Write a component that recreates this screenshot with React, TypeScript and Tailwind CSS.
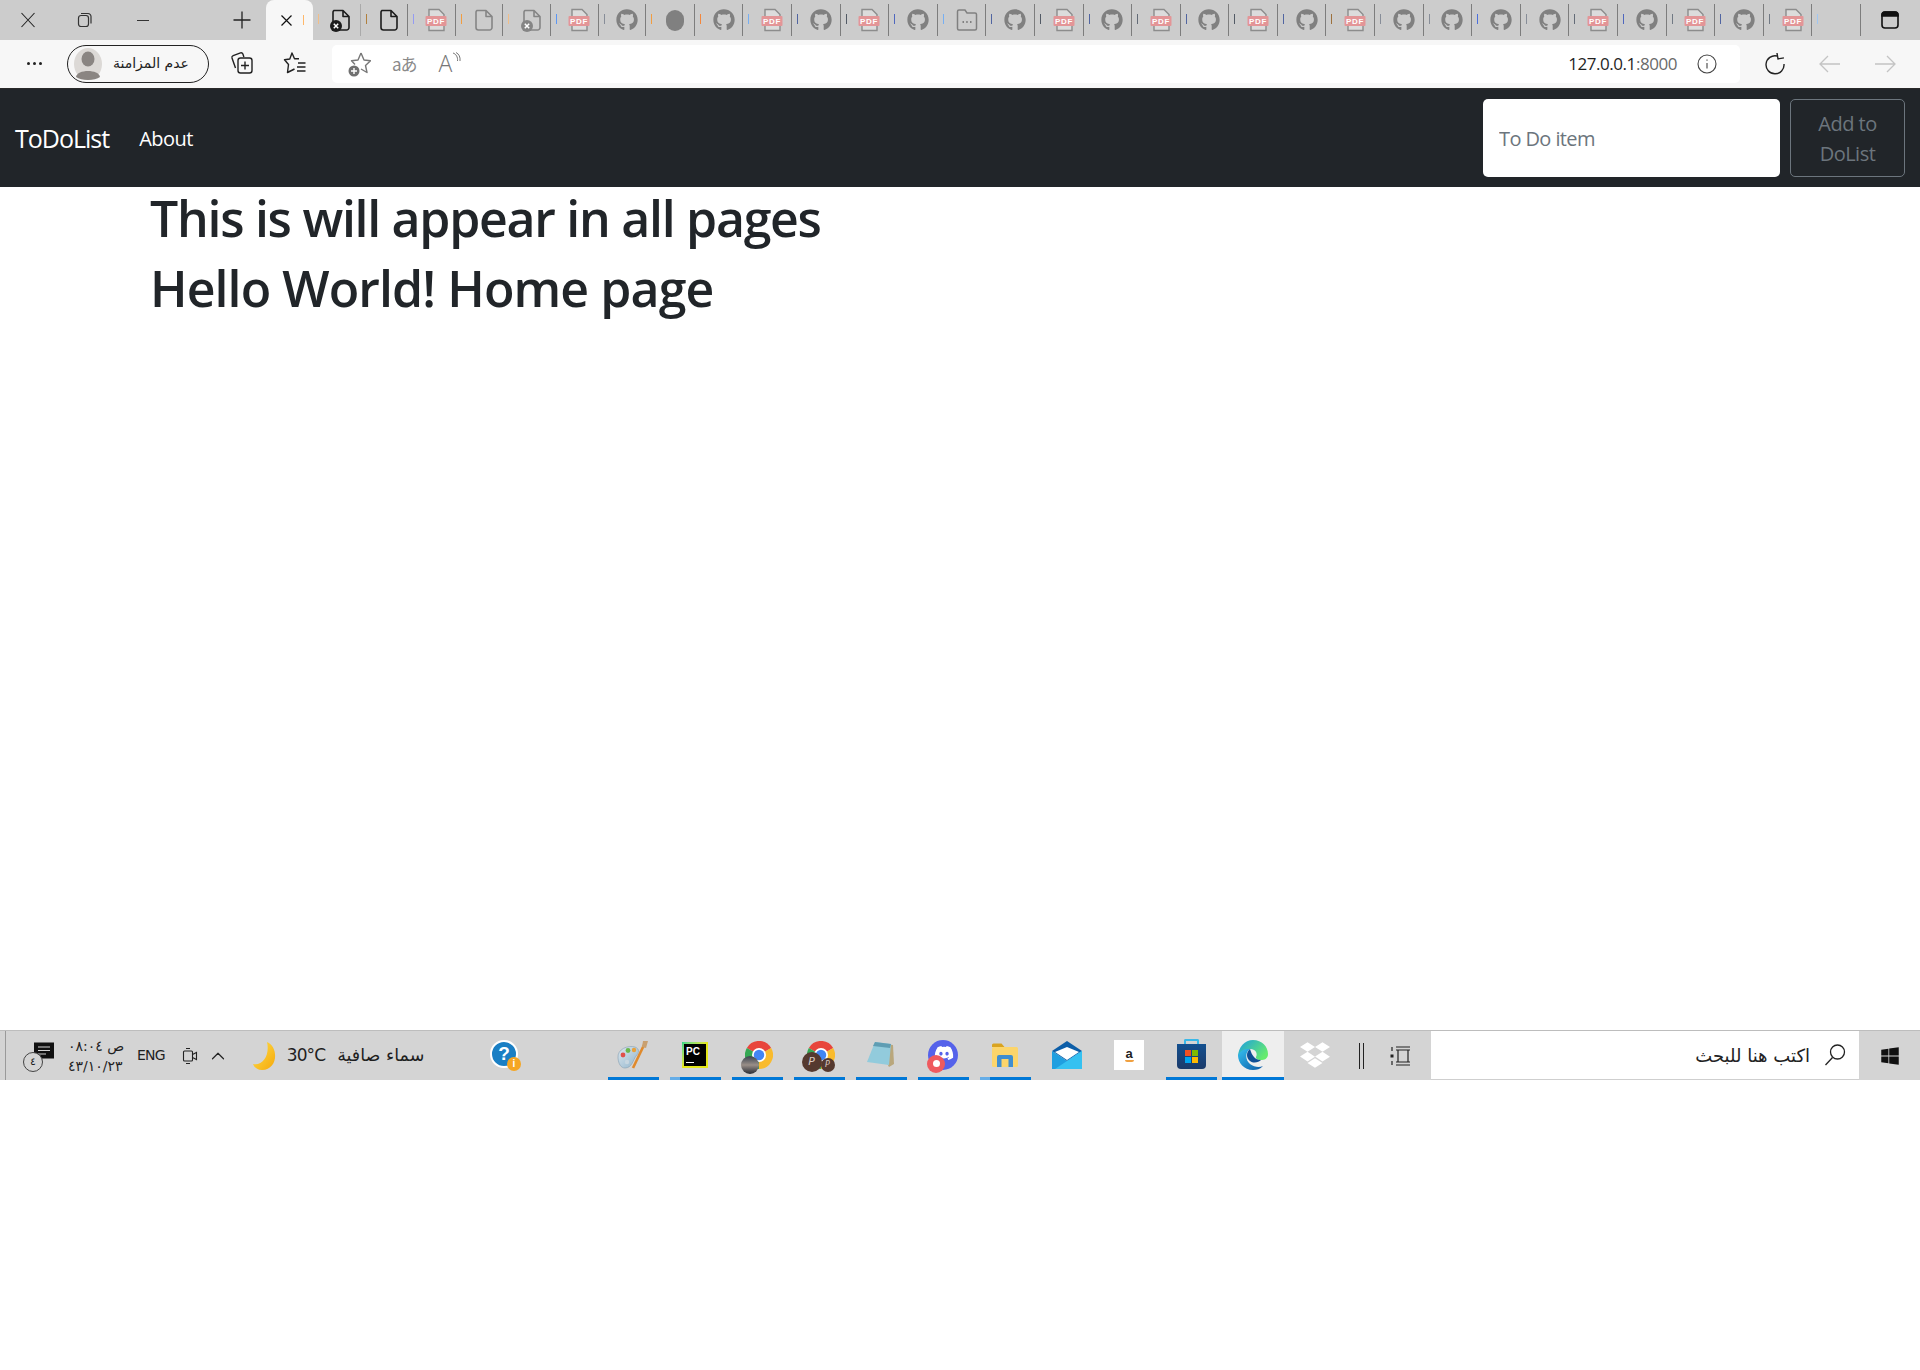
import { ChevronUp } from "lucide-react";
import { FaGithub, FaWindows, FaDropbox, FaDiscord } from "react-icons/fa";

// شريط التبويبات: ترتيب الأيقونات من اليسار إلى اليمين
const tabs = [
  { icon: "filex-dark", sliver: "bg-orange-300", faint: true },
  { icon: "file-dark", sliver: "bg-yellow-700" },
  { icon: "pdf", sliver: "bg-indigo-400" },
  { icon: "file", sliver: "bg-orange-400" },
  { icon: "filex", sliver: "bg-orange-300" },
  { icon: "pdf", sliver: "bg-blue-500" },
  { icon: "github", sliver: "bg-gray-500" },
  { icon: "dot", sliver: "bg-orange-400" },
  { icon: "github", sliver: "bg-orange-500" },
  { icon: "pdf", sliver: "bg-blue-400" },
  { icon: "github", sliver: "bg-blue-900" },
  { icon: "pdf", sliver: "bg-gray-800" },
  { icon: "github", sliver: "bg-blue-800" },
  { icon: "box", sliver: "bg-blue-400" },
  { icon: "github", sliver: "bg-blue-900" },
  { icon: "pdf", sliver: "bg-gray-800" },
  { icon: "github", sliver: "bg-blue-900" },
  { icon: "pdf", sliver: "bg-gray-700" },
  { icon: "github", sliver: "bg-blue-900" },
  { icon: "pdf", sliver: "bg-gray-800" },
  { icon: "github", sliver: "bg-blue-900" },
  { icon: "pdf", sliver: "bg-yellow-800" },
  { icon: "github", sliver: "bg-gray-500" },
  { icon: "github", sliver: "bg-gray-500" },
  { icon: "github", sliver: "bg-blue-700" },
  { icon: "github", sliver: "bg-gray-500" },
  { icon: "pdf", sliver: "bg-gray-700" },
  { icon: "github", sliver: "bg-blue-800" },
  { icon: "pdf", sliver: "bg-gray-600" },
  { icon: "github", sliver: "bg-blue-900" },
  { icon: "pdf", sliver: "bg-gray-600" },
  { icon: "none", sliver: "bg-blue-300" },
];

function FileShape({ color, badge }: { color: string; badge?: boolean }) {
  return (
    <svg width="26" height="26" viewBox="0 0 26 26" fill="none" stroke={color} strokeWidth="1.6">
      <path d="M6 3.5 h9 l6 6 v11 a2.5 2.5 0 0 1 -2.5 2.5 h-11 a2.5 2.5 0 0 1 -2.5 -2.5 v-15 a2 2 0 0 1 1 -2 z M15 3.5 v6 h6" strokeLinejoin="round" />
      {badge && <circle cx="8" cy="19" r="6" fill={color} stroke="none" />}
      {badge && <path d="M5.8 16.8 l4.4 4.4 M10.2 16.8 l-4.4 4.4" stroke="#fff" strokeWidth="1.5" />}
    </svg>
  );
}

function PdfIcon() {
  return (
    <svg width="26" height="26" viewBox="0 0 26 26" fill="none">
      <path d="M6 2.5 h10 l5 5 v16 h-15 z" stroke="#8c8c8c" strokeWidth="1.4" fill="#dcdcdc" />
      <rect x="2.5" y="9" width="21" height="10" rx="1" fill="#e39597" />
      <text x="13" y="17" textAnchor="middle" fontSize="8" fontWeight="700" fill="#fff" fontFamily="Liberation Sans, sans-serif" letterSpacing="0.6">PDF</text>
    </svg>
  );
}

function TabIcon({ name }: { name: string }) {
  if (name === "github") return <FaGithub className="text-[#808080] w-[22px] h-[22px]" />;
  if (name === "pdf") return <PdfIcon />;
  if (name === "file") return <FileShape color="#858585" />;
  if (name === "file-dark") return <FileShape color="#1c1c1c" />;
  if (name === "filex") return <FileShape color="#858585" badge />;
  if (name === "filex-dark") return <FileShape color="#1c1c1c" badge />;
  if (name === "dot") return <div className="w-[18px] h-[21px] rounded-full bg-[#808080]" />;
  if (name === "box")
    return (
      <svg width="22" height="24" viewBox="0 0 22 24" fill="none" stroke="#808080" strokeWidth="1.5">
        <path d="M3 2 h6 l2 3 h8 a1.5 1.5 0 0 1 1.5 1.5 v14 a1.5 1.5 0 0 1 -1.5 1.5 h-16 a1.5 1.5 0 0 1 -1.5 -1.5 v-17 a1.5 1.5 0 0 1 1.5 -1.5 z" />
        <path d="M6.5 14 h1.5 M10.2 14 h1.5 M14 14 h1.5" strokeWidth="2" />
      </svg>
    );
  return null;
}

function TabBar() {
  return (
    <div className="flex h-10 bg-[#cccccc] overflow-hidden">
      <div className="w-[266px] shrink-0 flex items-center text-[#1c1c1c]">
        <svg className="ml-[20px]" width="16" height="16" viewBox="0 0 16 16" stroke="#222" strokeWidth="1.1"><path d="M1.5 1 L14.5 15 M14.5 1 L1.5 15" /></svg>
        <svg className="ml-[41px]" width="16" height="16" viewBox="0 0 16 16" fill="none" stroke="#333" strokeWidth="1.2"><rect x="1.5" y="3.5" width="10" height="11" rx="2.5" /><path d="M4 1.5 h7 a3 3 0 0 1 3 3 v7" /></svg>
        <div className="ml-[44px] w-[12px] h-px bg-[#333]" />
        <svg className="ml-[84px]" width="18" height="18" viewBox="0 0 18 18" stroke="#222" strokeWidth="1.3"><path d="M9 0.5 V17.5 M0.5 9 H17.5" /></svg>
      </div>
      <div className="w-[47px] shrink-0 h-full bg-[#f7f7f7] rounded-t-lg flex items-center relative">
        <svg className="ml-[15px]" width="11" height="11" viewBox="0 0 11 11" stroke="#111" strokeWidth="1.2"><path d="M0.5 0.5 L10.5 10.5 M10.5 0.5 L0.5 10.5" /></svg>
        <div className="ml-[11px] w-px h-[10px] bg-orange-300" />
      </div>
      {tabs.map((t, i) => (
        <div
          key={i}
          className={`relative h-[32px] mt-[4px] shrink-0 flex items-center justify-center border-r pl-[10px] ${i < 7 ? "w-[47.6px]" : "w-[48.6px]"} ${t.faint ? "border-[#aaaaaa]" : "border-[#7d7d7d]"}`}
        >
          <div className={`absolute left-[5px] top-[10px] w-px h-[10px] opacity-70 ${t.sliver}`} />
          <TabIcon name={t.icon} />
        </div>
      ))}
      <div className="flex-1 flex items-center justify-end pr-[20px]">
        <svg width="20" height="20" viewBox="0 0 20 20" fill="none" stroke="#111" strokeWidth="1.6">
          <rect x="2" y="2" width="16" height="16" rx="3" />
          <path d="M2 6 h16 V5 a3 3 0 0 0 -3 -3 H5 a3 3 0 0 0 -3 3 z" fill="#111" />
        </svg>
      </div>
    </div>
  );
}

function ToolBar() {
  return (
    <div className="flex items-center h-[49px] bg-[#f7f7f7] border-b border-[#2a2a2a] pb-[1px]">
      <div className="w-[67px] shrink-0 flex justify-center gap-[3px] pl-[2px]">
        <span className="w-[3px] h-[3px] rounded-full bg-[#222]" />
        <span className="w-[3px] h-[3px] rounded-full bg-[#222]" />
        <span className="w-[3px] h-[3px] rounded-full bg-[#222]" />
      </div>
      <div className="w-[142px] h-[38px] shrink-0 rounded-full border-[1.5px] border-[#222] flex items-center pl-[5px] gap-[10px]">
        <svg width="30" height="32" viewBox="0 0 30 32" className="shrink-0">
          <ellipse cx="15" cy="16" rx="14" ry="16" fill="#dcd9d6" />
          <ellipse cx="15" cy="11" rx="6.5" ry="7.5" fill="#8a8582" />
          <path d="M3 29 C4 21 26 21 27 29 C22 33 8 33 3 29 z" fill="#8a8582" />
        </svg>
        <span dir="rtl" className="text-[14px] text-[#222] [font-family:'DejaVu_Sans',sans-serif] whitespace-nowrap tracking-[-0.5px]">عدم المزامنة</span>
      </div>
      <svg className="ml-[21px] shrink-0 -mt-[1px]" width="24" height="24" viewBox="0 0 24 24" fill="none" stroke="#222" strokeWidth="1.4">
        <path d="M5.5 17 L2 7 a2 2 0 0 1 1.2 -2.4 L10.5 1.8 a2 2 0 0 1 2.4 1.2 l1 3" />
        <rect x="8" y="7" width="14" height="15" rx="2.5" />
        <path d="M15 10.5 v8 M11 14.5 h8" />
      </svg>
      <svg className="ml-[29px] shrink-0 -mt-[1px]" width="24" height="24" viewBox="0 0 24 24" fill="none" stroke="#222" strokeWidth="1.4">
        <path d="M16 7.8 L11.5 7.8 L9 2 L6.8 8 L1.5 8.8 L5.5 13.5 L4.5 21.5 L11.5 18 M15 12 h7.5 M14 16 h8.5 M14 20 h8.5" strokeLinejoin="round" />
      </svg>
      <div className="ml-[25px] flex-1 h-[38px] bg-white rounded-[5px] flex items-center mr-[180px] relative">
        <svg className="ml-[15px] shrink-0" width="24" height="26" viewBox="0 0 24 26" fill="none" stroke="#777" strokeWidth="1.4">
          <path d="M14 2 L17 9 L23.5 9.8 L18.5 14.5 L20 21.5 L14 18" strokeLinejoin="round" />
          <path d="M14 2 L11 9 L4.5 9.8 L8 13.5" strokeLinejoin="round" />
          <circle cx="7" cy="20" r="5.5" fill="#707070" stroke="none" />
          <path d="M7 17 v6 M4 20 h6" stroke="#fff" strokeWidth="1.4" />
        </svg>
        <span className="ml-[21px] text-[17px] text-[#8a8a8a] [font-family:'Noto_Sans_CJK_JP',sans-serif] tracking-[-1px] leading-none">aあ</span>
        <span className="ml-[22px] text-[23px] text-[#777] [font-family:'Open_Sans',sans-serif] font-light leading-none relative">
          A
          <svg className="absolute -right-[9px] top-0" width="9" height="10" viewBox="0 0 9 10" fill="none" stroke="#777" strokeWidth="1"><path d="M1 1 C4 2 6 5 5.5 9 M4 0.5 C7 2 8.5 5 8 9" /></svg>
        </span>
        <span className="ml-auto text-[17px] tracking-[-0.45px] text-[#1f1f1f] [font-family:'Open_Sans',sans-serif]">127.0.0.1<span className="text-[#6a6a6a]">:8000</span></span>
        <svg className="ml-[20px] mr-[23px] shrink-0" width="20" height="20" viewBox="0 0 20 20" fill="none" stroke="#444" strokeWidth="1.1">
          <circle cx="10" cy="10" r="9" />
          <path d="M10 9 v5.5 M10 5.5 v1.3" />
        </svg>
      </div>
      <div className="absolute left-[1764px] flex items-center">
        <svg width="22" height="22" viewBox="0 0 22 22" fill="none" stroke="#222" strokeWidth="1.4">
          <path d="M13 3 A9 9 0 1 0 20 11" />
          <path d="M13.5 0 V6 H19.5" strokeWidth="1.4" transform="rotate(-10 13 3)" />
        </svg>
        <svg className="ml-[33px]" width="22" height="18" viewBox="0 0 22 18" fill="none" stroke="#c4c4c4" strokeWidth="1.3"><path d="M21 9 H1 M9 1 L1 9 L9 17" /></svg>
        <svg className="ml-[33px]" width="22" height="18" viewBox="0 0 22 18" fill="none" stroke="#c4c4c4" strokeWidth="1.3"><path d="M1 9 H21 M13 1 L21 9 L13 17" /></svg>
      </div>
    </div>
  );
}

function NavBar() {
  return (
    <nav className="flex items-center justify-between h-[98px] bg-[#212529] px-[15px] [font-family:'Open_Sans',sans-serif]">
      <div className="flex items-center pt-[2px]">
        <span className="text-[25px] text-white tracking-[-1px]">ToDoList</span>
        <a className="ml-[30px] text-[20px] text-white tracking-[-0.55px]">About</a>
      </div>
      <form className="flex items-center gap-[10px]">
        <input
          placeholder="To Do item"
          className="w-[297px] h-[78px] bg-white rounded-[5px] px-[16px] text-[20px] tracking-[-0.6px] placeholder:text-[#6c757d] outline-none"
        />
        <button type="button" className="w-[115px] h-[78px] pt-[2px] rounded-[5px] border border-[#6c757d] text-[#6c757d] text-[20px] leading-[30px] tracking-[-0.5px]">
          Add to DoList
        </button>
      </form>
    </nav>
  );
}

function Palette() {
  return (
    <svg width="32" height="32" viewBox="0 0 32 32">
      <defs>
        <linearGradient id="pal" x1="0" y1="0" x2="1" y2="1"><stop offset="0" stopColor="#dfe8ee" /><stop offset="1" stopColor="#8fb4cc" /></linearGradient>
      </defs>
      <path d="M1 19 C0 10 11 6 18 8 C23 10 22 14 19 17 C16 21 15 29 8 29 C4 29 1.5 25 1 19 z" fill="url(#pal)" stroke="#8ea6b8" strokeWidth="0.7" />
      <circle cx="6" cy="16" r="2.4" fill="#e0504a" />
      <circle cx="11" cy="11.5" r="2.4" fill="#6bb84c" />
      <circle cx="17" cy="11" r="2.2" fill="#e9a13a" />
      <circle cx="10" cy="23" r="2.2" fill="#c7d6e0" />
      <path d="M27 6 L16 29" stroke="#e08a2c" strokeWidth="2.6" />
      <path d="M25 8 L26 2 L31 2 L29 9 z" fill="#c9a070" />
    </svg>
  );
}

function Chrome({ children }: { children: React.ReactNode }) {
  return (
    <div className="relative w-[28px] h-[28px] ml-[3px]">
      <svg width="28" height="28" viewBox="0 0 32 32">
        <path d="M16 16 L2.1 8 A16 16 0 0 1 29.9 8 z" fill="#e8453c" />
        <path d="M16 16 L29.9 8 A16 16 0 0 1 16 32 z" fill="#f9bb2d" />
        <path d="M16 16 L16 32 A16 16 0 0 1 2.1 8 z" fill="#34a853" />
        <circle cx="16" cy="16" r="8" fill="#fff" />
        <circle cx="16" cy="16" r="6" fill="#4285f4" />
      </svg>
      {children}
    </div>
  );
}

const taskIcons = [
  { running: true, node: <Palette /> },
  {
    running: true,
    multi: true,
    node: (
      <div className="w-[26px] h-[26px] bg-gradient-to-br from-[#21d789] via-[#e4e71a] to-[#e4e71a] p-[2px]">
        <div className="w-full h-full bg-black text-white text-[10px] font-bold leading-[12px] px-[2px] pt-[2px] [font-family:'Liberation_Sans',sans-serif]">
          PC
          <div className="w-[8px] h-px bg-white mt-[4px]" />
        </div>
      </div>
    ),
  },
  {
    running: true,
    node: (
      <Chrome>
        <div className="absolute -left-[4px] bottom-[-5px] w-[18px] h-[18px] rounded-full bg-gradient-to-b from-[#3b4450] via-[#9a8f88] to-[#2a2d35]" />
      </Chrome>
    ),
  },
  {
    running: true,
    node: (
      <Chrome>
        <div className="absolute -left-[5px] bottom-[-3px] w-[20px] h-[20px] rounded-full bg-[#55392f] text-[#d8c8c0] text-[11px] italic text-center leading-[20px]">P</div>
        <div className="absolute left-[14px] bottom-[-3px] w-[14px] h-[14px] rounded-full bg-[#55392f] text-[#d8c8c0] text-[8px] italic text-center leading-[14px]">P</div>
      </Chrome>
    ),
  },
  {
    running: true,
    node: (
      <svg width="30" height="30" viewBox="0 0 30 30">
        <path d="M10 3 L27 5 L28 24 L23 27 z" fill="#b9a77c" />
        <path d="M9 2 L25 4 L23 25 L1 22 z" fill="#92cbdc" />
        <path d="M9 2 L25 4 L24 8 L7 6 z" fill="#5f9db3" />
      </svg>
    ),
  },
  {
    running: true,
    node: (
      <div className="relative w-[30px] h-[30px] rounded-full bg-[#5562ea] flex items-center justify-center">
        <FaDiscord className="text-white w-[20px] h-[20px] -mt-[4px] ml-[2px]" />
        <div className="absolute -left-[1px] bottom-[-3px] w-[18px] h-[18px] rounded-full bg-[#ef5a5f] flex items-center justify-center">
          <div className="w-[7px] h-[7px] rounded-full bg-white" />
        </div>
      </div>
    ),
  },
  {
    running: true,
    multi: true,
    node: (
      <svg width="28" height="24" viewBox="0 0 28 24">
        <path d="M1 2 a1.5 1.5 0 0 1 1.5 -1.5 h8 l3 3.5 h-12.5 z" fill="#d9a320" />
        <rect x="1" y="4" width="26" height="20" rx="1.5" fill="#fcd56b" />
        <path d="M6 24 V14 a2 2 0 0 1 2 -2 H20 a2 2 0 0 1 2 2 V24 H17.5 V16 H10.5 V24 z" fill="#3f8ed0" />
      </svg>
    ),
  },
  {
    running: false,
    node: (
      <svg width="30" height="28" viewBox="0 0 30 28">
        <path d="M0 10 L15 0 L30 10 L15 20 z" fill="#0d5ea8" />
        <path d="M3 11 L15 6 L27 11 L15 19 z" fill="#fff" />
        <path d="M0 10 L15 20 L30 10 V28 H0 z" fill="#1f9fe0" />
        <path d="M30 10 V28 H3 z" fill="#35c1f1" />
      </svg>
    ),
  },
  {
    running: false,
    node: (
      <div className="w-[30px] h-[30px] bg-white flex flex-col items-center justify-center text-[#222] text-[13px] font-bold leading-none [font-family:'Liberation_Sans',sans-serif]">
        a
        <div className="w-[9px] h-[2px] rounded-b-full bg-[#f0a040]" />
      </div>
    ),
  },
  {
    running: true,
    node: (
      <div className="relative w-[29px] h-[30px] mt-[-2px]">
        <div className="absolute left-[7px] top-0 w-[15px] h-[8px] border-2 border-b-0 border-[#3ab8e8] rounded-t-[2px]" />
        <div className="absolute left-0 top-[5px] w-[29px] h-[25px] rounded-b-[4px] bg-gradient-to-b from-[#12508f] to-[#1a3a6a] grid grid-cols-2 gap-px px-[8px] py-[6px]">
          <div className="bg-[#f25022]" />
          <div className="bg-[#7fba00]" />
          <div className="bg-[#00a4ef]" />
          <div className="bg-[#ffb900]" />
        </div>
      </div>
    ),
  },
  {
    running: true,
    active: true,
    node: (
      <svg width="30" height="30" viewBox="0 0 30 30">
        <defs>
          <linearGradient id="edgeA" x1="0" y1="0" x2="1" y2="1"><stop offset="0" stopColor="#35c1f1" /><stop offset="1" stopColor="#0c59a4" /></linearGradient>
          <linearGradient id="edgeB" x1="0" y1="0" x2="1" y2="0.6"><stop offset="0" stopColor="#1b9de2" /><stop offset="1" stopColor="#66eb6e" /></linearGradient>
        </defs>
        <path d="M15 0 C24 0 30 6.5 30 14 C30 19 26 20 23 20 C19 20 17.5 18.5 18 17 C19.5 15 19 9.5 13 9 C8 9 3 13 0 17 C0 7 7 0 15 0 z" fill="url(#edgeB)" />
        <path d="M0 15 C3 10 8 8 12 9 C7 12 7 20 12 24 C16 27 21 28 25 26 C22 29 19 30 15 30 C6 30 0 23 0 15 z" fill="url(#edgeA)" />
        <path d="M12 9 C8 12 8 18 12 21 C16 24 21 22 23 20 C19 20 17 18.5 16 17 C14 15 13 12 12 9 z" fill="#0f4f95" />
      </svg>
    ),
  },
  {
    running: false,
    node: <FaDropbox className="text-white w-[30px] h-[30px]" />,
  },
];

function TaskBar() {
  return (
    <div className="flex items-stretch h-[50px] bg-[#d4d4d4] border-t border-[#bdbdbd] text-[#1f1f1f] [font-family:'DejaVu_Sans',sans-serif]">
      <div className="w-[602px] shrink-0 flex items-center relative">
        <div className="ml-[5px] w-px h-full bg-[#9a9a9a]" />
        <div className="ml-[17px] relative w-[30px] h-[32px]">
          <svg className="absolute right-[-2px] top-[1px]" width="22" height="24" viewBox="0 0 22 23">
            <path d="M1 1 H21 V17 H9 L4 22 V17 H1 z" fill="#111" />
            <path d="M5 5.5 H17 M5 9 H17 M5 12.5 H13" stroke="#d4d4d4" strokeWidth="1.1" />
          </svg>
          <div dir="rtl" className="absolute left-0 bottom-0 w-[20px] h-[20px] rounded-full bg-[#d4d4d4] border border-[#444] text-[11px] text-center leading-[18px]">٤</div>
        </div>
        <div className="ml-[15px] w-[54px] shrink-0 text-[14px] leading-[20px] text-right whitespace-nowrap tracking-[-0.6px]">
          <div dir="rtl" className="text-right" style={{ direction: "ltr" }}>ص ٠٨:٠٤</div>
          <div>٤٣/١٠/٢٣</div>
        </div>
        <span className="ml-[15px] text-[14px] tracking-[-0.8px]">ENG</span>
        <svg className="ml-[17px]" width="16" height="20" viewBox="0 0 16 20" fill="none" stroke="#222" strokeWidth="1.1">
          <rect x="1.5" y="5" width="9" height="10" rx="1" />
          <path d="M10.5 8.5 L14.5 6.5 V13.5 L10.5 11.5 M4 2.5 H8 M4 17.5 H8" />
        </svg>
        <ChevronUp className="ml-[9px] text-[#222] w-[22px] h-[22px]" strokeWidth={1.3} />
        <svg className="ml-[24px]" width="24" height="28" viewBox="0 0 24 28">
          <defs>
            <linearGradient id="moon" x1="0" y1="0" x2="1" y2="1"><stop offset="0" stopColor="#ffe04d" /><stop offset="1" stopColor="#f5a80a" /></linearGradient>
          </defs>
          <path d="M14 0 C26 5 25 28 9 28 C4 28 1 25 0 22 C10 24 17 13 14 0 z" fill="url(#moon)" />
        </svg>
        <span className="ml-[10px] text-[17px] tracking-[-0.9px]">30°C</span>
        <span dir="rtl" className="ml-[12px] text-[17.5px] tracking-[-0.5px] whitespace-nowrap">سماء صافية</span>
        <div className="absolute left-[490px] top-[9px] w-[28px] h-[28px]">
          <div className="w-[28px] h-[28px] rounded-full bg-[#1a7fc4] border-2 border-white text-white text-[19px] font-bold text-center leading-[24px] [font-family:'Liberation_Sans',sans-serif]">?</div>
          <div className="absolute right-[-3px] bottom-[-3px] w-[14px] h-[14px] rounded-full bg-[#f5a623] text-white text-[10px] font-bold text-center leading-[14px] [font-family:'Liberation_Sans',sans-serif]">i</div>
        </div>
      </div>
      {taskIcons.map((t, i) => (
        <div key={i} className={`relative w-[62px] shrink-0 flex items-center justify-center pb-[2px] ${t.active ? "bg-[#eeeeee]" : ""}`}>
          {t.node}
          {t.running && (
            <div className={`absolute bottom-0 h-[3px] bg-[#0078d7] ${t.active ? "inset-x-0" : "left-[5.5px] right-[5.5px]"}`}>
              {t.multi && <div className="w-[10px] h-full bg-[#66aee8]" />}
            </div>
          )}
        </div>
      ))}
      <div className="w-[30px] shrink-0 flex items-center justify-center">
        <div className="w-[5px] h-[26px] border-x border-[#222]" />
      </div>
      <div className="flex-1 flex items-center justify-center pr-[6px]">
        <svg width="24" height="24" viewBox="0 0 24 24" fill="none" stroke="#222" strokeWidth="1.2">
          <path d="M7 3 H21 M7 6 H21 M7 21 H21 M7 18 H21 M9 6 V18 M19 6 V18" />
          <rect x="1.5" y="10.5" width="3" height="3" fill="#222" stroke="none" />
          <path d="M3 3 V7 M3 17 V21" />
        </svg>
      </div>
      <div className="w-[428px] shrink-0 bg-white border-b border-[#cfcfcf] flex items-center justify-end pr-[13px] gap-[14px]">
        <span dir="rtl" className="text-[18px] text-[#222] tracking-[-0.15px] whitespace-nowrap">اكتب هنا للبحث</span>
        <svg width="22" height="24" viewBox="0 0 22 24" fill="none" stroke="#222" strokeWidth="1.3">
          <circle cx="13.5" cy="9" r="7" />
          <path d="M8.5 14.5 L1.5 22" />
        </svg>
      </div>
      <div className="w-[61px] shrink-0 flex items-center justify-center">
        <FaWindows className="text-[#111] w-[20px] h-[20px]" />
      </div>
    </div>
  );
}

export default function App() {
  return (
    <div className="relative min-h-[1370px] bg-white">
      <TabBar />
      <ToolBar />
      <NavBar />
      <main className="h-[843px] pl-[150px] pt-[1px] [font-family:'Open_Sans',sans-serif] text-[#212529] text-[50px] leading-[60px] font-semibold">
        <h1 className="mb-[10px] tracking-[-1.27px]">This is will appear in all pages</h1>
        <h1 className="tracking-[-0.9px]">Hello World! Home page</h1>
      </main>
      <TaskBar />
    </div>
  );
}
